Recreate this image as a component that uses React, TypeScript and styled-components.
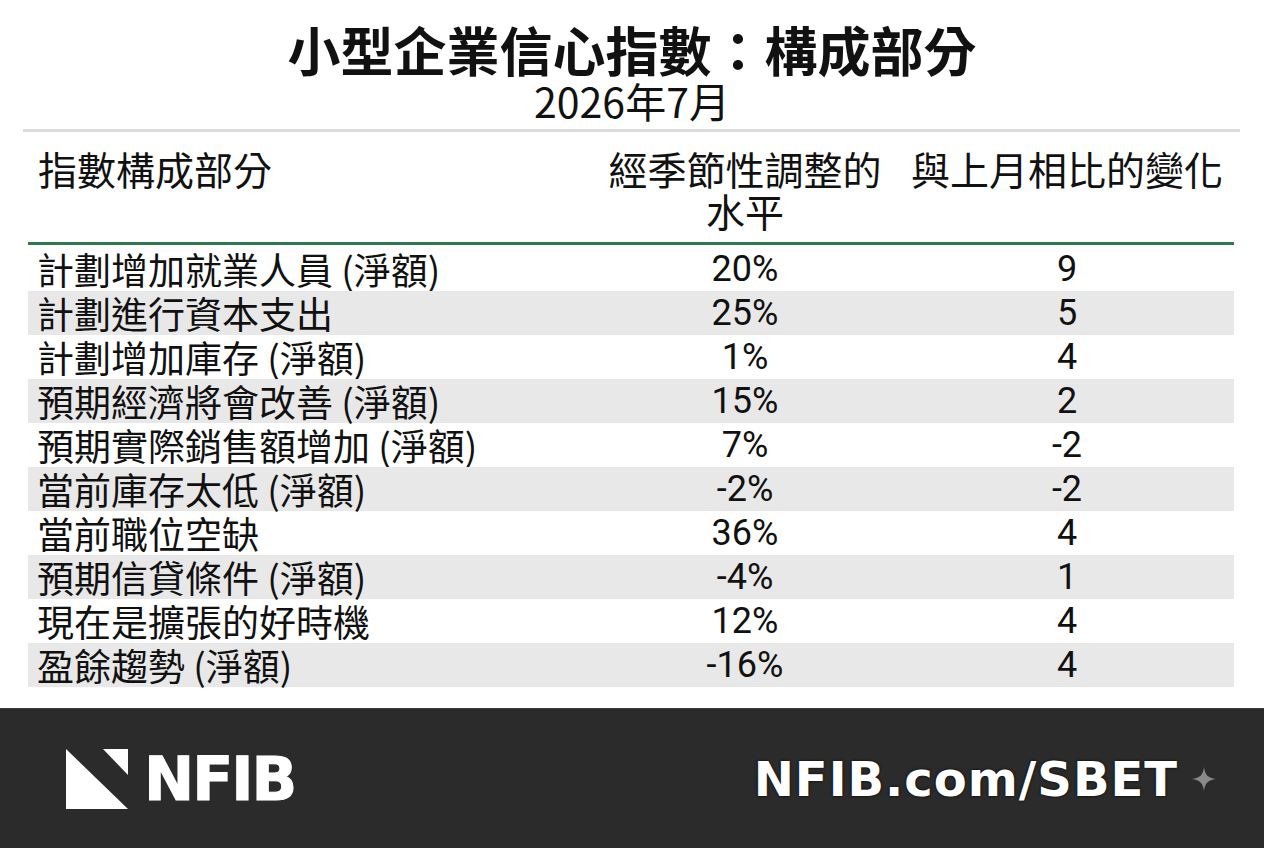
import React from 'react'
import styled, { createGlobalStyle } from 'styled-components'

const GlobalStyle = createGlobalStyle`
	html, body {
		margin: 0;
		padding: 0;
		background: #ffffff;
	}
	body {
		font-family: 'Noto Sans CJK TC', 'Noto Sans', sans-serif;
		color: #111111;
	}
`

interface IRow {
	label: string
	level: string
	change: string
}

const rows: IRow[] = [
	{ label: '計劃增加就業人員 (淨額)', level: '20%', change: '9' },
	{ label: '計劃進行資本支出', level: '25%', change: '5' },
	{ label: '計劃增加庫存 (淨額)', level: '1%', change: '4' },
	{ label: '預期經濟將會改善 (淨額)', level: '15%', change: '2' },
	{ label: '預期實際銷售額增加 (淨額)', level: '7%', change: '-2' },
	{ label: '當前庫存太低 (淨額)', level: '-2%', change: '-2' },
	{ label: '當前職位空缺', level: '36%', change: '4' },
	{ label: '預期信貸條件 (淨額)', level: '-4%', change: '1' },
	{ label: '現在是擴張的好時機', level: '12%', change: '4' },
	{ label: '盈餘趨勢 (淨額)', level: '-16%', change: '4' },
]

// layout
const Page = styled.div`
	width: 1264px;
	height: 848px;
	display: flex;
	flex-direction: column;
	overflow: hidden;
`

const Heading = styled.header`
	display: flex;
	flex-direction: column;
	align-items: center;
	padding-top: 20px;
`

const Title = styled.h1`
	margin: 0;
	font-size: 53px;
	line-height: 58px;
	font-weight: 700;
	letter-spacing: 0;
`

const Subtitle = styled.div`
	font-size: 41px;
	line-height: 46px;
	font-weight: 400;
	margin-top: -1px;
`

const TopRule = styled.div`
	margin: 6px 24px 0 23px;
	height: 3px;
	background: #dcdcdc;
`

const Table = styled.div`
	margin: 0 30px 0 28px;
	display: flex;
	flex-direction: column;
`

const grid = `
	display: grid;
	grid-template-columns: 562px 310px 334px;
`

const HeadRow = styled.div`
	${grid}
	padding: 15px 0 11px;
	border-bottom: 3px solid #2e7a4c;
	font-size: 39px;
	line-height: 42px;
`

const HeadCell = styled.div<{ $align?: 'left' | 'center' }>`
	text-align: ${(p) => p.$align || 'center'};
	padding-left: ${(p) => (p.$align === 'left' ? '10px' : '0')};
	white-space: nowrap;
`

const Body = styled.div`
	margin-top: 2px;
	display: flex;
	flex-direction: column;
`

const Row = styled.div<{ $striped: boolean }>`
	${grid}
	height: 44px;
	align-items: center;
	background: ${(p) => (p.$striped ? '#e8e8e8' : 'transparent')};
	font-size: 37px;
	line-height: 44px;
`

const Label = styled.div`
	padding-left: 9px;
	white-space: nowrap;
`

const Value = styled.div`
	text-align: center;
	font-family: Roboto, 'Noto Sans', sans-serif;
	font-size: 36px;
`

const Footer = styled.footer`
	margin-top: auto;
	height: 140px;
	background: #2b2b2b;
	border-top: 1px solid #3c3c3c;
	box-sizing: border-box;
	display: flex;
	align-items: center;
	justify-content: space-between;
	padding: 0 48px 0 66px;
	color: #ffffff;
`

const Brand = styled.div`
	display: flex;
	align-items: center;
	gap: 16px;
`

const BrandName = styled.span`
	font-family: 'DejaVu Sans', 'Liberation Sans', sans-serif;
	font-weight: 700;
	font-size: 60px;
	line-height: 1;
	letter-spacing: -2px;
	-webkit-text-stroke: 1px #ffffff;
`

const Link = styled.div`
	display: flex;
	align-items: center;
	gap: 14px;
`

const LinkText = styled.span`
	font-family: 'DejaVu Sans', 'Liberation Sans', sans-serif;
	font-weight: 700;
	font-size: 48px;
	line-height: 1;
	letter-spacing: 1px;
	text-shadow: 0 0 3px #000;
`

const Logo = () => (
	<svg width="62" height="60" viewBox="0 0 62 60">
		<polygon points="0,0 0,60 62,60" fill="#ffffff" />
		<polygon points="37,0 62,0 62,26" fill="#ffffff" />
	</svg>
)

const Sparkle = () => (
	<svg width="24" height="24" viewBox="0 0 24 24">
		<path
			d="M12 0 C13 8 16 11 24 12 C16 13 13 16 12 24 C11 16 8 13 0 12 C8 11 11 8 12 0 Z"
			fill="#8a8a8a"
		/>
	</svg>
)

export default function App() {
	return (
		<>
			<GlobalStyle />
			<Page>
				<Heading>
					<Title>小型企業信心指數：構成部分</Title>
					<Subtitle>2026年7月</Subtitle>
				</Heading>
				<TopRule />
				<Table>
					<HeadRow>
						<HeadCell $align="left">指數構成部分</HeadCell>
						<HeadCell>
							經季節性調整的
							<br />
							水平
						</HeadCell>
						<HeadCell>與上月相比的變化</HeadCell>
					</HeadRow>
					<Body>
						{rows.map((r, i) => (
							<Row key={i} $striped={i % 2 === 1}>
								<Label>{r.label}</Label>
								<Value>{r.level}</Value>
								<Value>{r.change}</Value>
							</Row>
						))}
					</Body>
				</Table>
				<Footer>
					<Brand>
						<Logo />
						<BrandName>NFIB</BrandName>
					</Brand>
					<Link>
						<LinkText>NFIB.com/SBET</LinkText>
						<Sparkle />
					</Link>
				</Footer>
			</Page>
		</>
	)
}
